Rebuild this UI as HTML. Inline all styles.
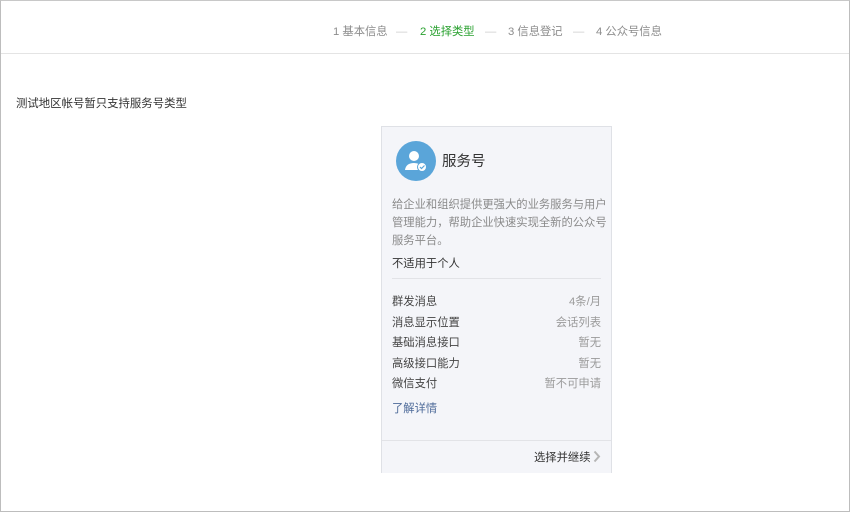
<!DOCTYPE html>
<html><head><meta charset="utf-8"><style>
*{margin:0;padding:0;box-sizing:border-box}
body{width:850px;height:512px;background:#fff;font-family:"Liberation Sans","Noto Sans CJK SC",sans-serif;position:relative;overflow:hidden;font-size:11.3px}
.frame{position:absolute;left:0;top:0;width:850px;height:512px;border:1px solid #bdbdbd;border-top-color:#c8c8c8}
.hdr{position:absolute;left:1px;top:53px;width:848px;height:1px;background:#e4e4e4}
.steps{position:absolute;top:24px;left:333px;font-size:11.3px;color:#8c8c8c;white-space:nowrap;line-height:16px}
.steps span{position:absolute;white-space:nowrap}
.note{position:absolute;left:16px;top:95px;font-size:11.4px;color:#333}
.card{position:absolute;left:381px;top:126px;width:231px;height:347px;background:#f4f5f9;border:1px solid #dfe1e6;border-bottom:none}
.abs{position:absolute;white-space:nowrap}
.ic{position:absolute;left:14px;top:14px;width:40px;height:40px;border-radius:50%;background:#5aa5d9}
.desc{position:absolute;left:10px;top:69px;width:218px;font-size:11.3px;line-height:18px;color:#8a8a8a}
.row{position:absolute;left:10px;width:209px;font-size:11.3px;color:#444;height:16px;line-height:16px}
.row b{font-weight:normal;position:absolute;right:0;color:#9a9a9a}
</style></head><body>
<div class="frame"></div>
<div class="hdr"></div>
<div class="steps">
<span style="left:0">1 基本信息</span>
<span style="left:63px;color:#ccc">—</span>
<span style="left:87px;color:#2aa130">2 选择类型</span>
<span style="left:152px;color:#ccc">—</span>
<span style="left:175px">3 信息登记</span>
<span style="left:240px;color:#ccc">—</span>
<span style="left:263px">4 公众号信息</span>
</div>
<div class="note">测试地区帐号暂只支持服务号类型</div>
<div class="card">
<div class="ic"><svg width="40" height="40" viewBox="0 0 40 40"><circle cx="18" cy="15" r="5" fill="#fff"/><path d="M9 29 q1-7 9-7 q5 0 7 3 v4 z" fill="#fff"/><circle cx="26" cy="26" r="4.5" fill="#fff" stroke="#5aa5d9" stroke-width="1"/><path d="M24 26 l1.5 1.5 l3-3" stroke="#5aa5d9" stroke-width="1.2" fill="none"/></svg></div>
<div class="abs" style="left:60px;top:23px;font-size:14.5px;color:#333">服务号</div>
<div class="desc">给企业和组织提供更强大的业务服务与用户管理能力，帮助企业快速实现全新的公众号服务平台。</div>
<div class="abs" style="left:10px;top:128px;color:#333">不适用于个人</div>
<div class="abs" style="left:10px;top:151px;width:209px;height:1px;background:#e2e3e7"></div>
<div class="row" style="top:167px">群发消息<b>4条/月</b></div>
<div class="row" style="top:188px">消息显示位置<b>会话列表</b></div>
<div class="row" style="top:208px">基础消息接口<b>暂无</b></div>
<div class="row" style="top:229px">高级接口能力<b>暂无</b></div>
<div class="row" style="top:249px">微信支付<b>暂不可申请</b></div>
<div class="abs" style="left:10px;top:273px;color:#4d6a99">了解详情</div>
<div class="abs" style="left:0;top:313px;width:229px;height:1px;background:#e2e3e7"></div>
<div class="abs" style="left:152px;top:322px;color:#333">选择并继续</div>
<svg class="abs" style="left:211px;top:323px" width="8" height="13" viewBox="0 0 8 13"><path d="M1.5 1.5 L6 6.5 L1.5 11.5" stroke="#b5b5b5" stroke-width="2" fill="none"/></svg>
</div>
</body></html>
